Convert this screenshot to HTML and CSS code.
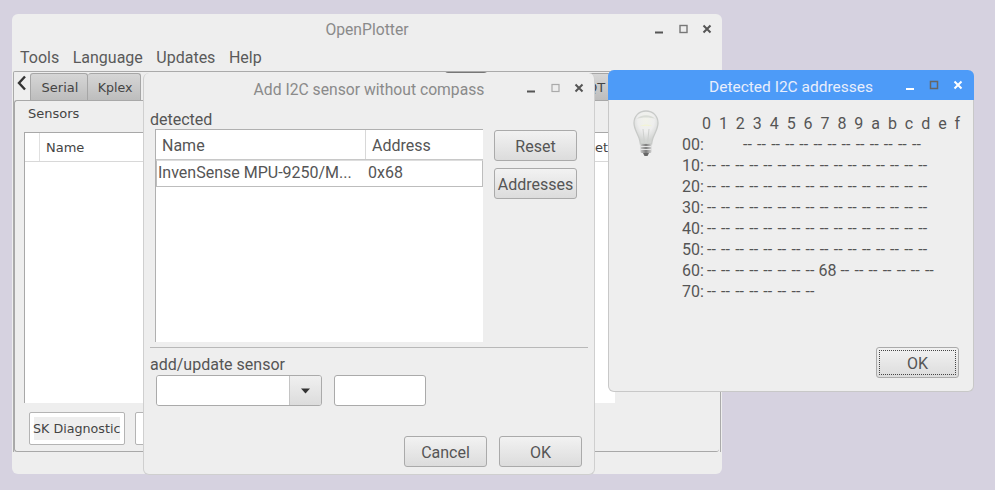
FILE: index.html
```html
<!DOCTYPE html>
<html lang="en">
<head>
<meta charset="utf-8">
<title>OpenPlotter</title>
<link rel="stylesheet" href="styles.css">
</head>
<body>
<section class="win main">
  <div class="titlebar">
    <span class="title">OpenPlotter</span>
    <div class="wctl">
      <svg viewBox="0 0 72 12" width="72" height="12"><path d="M3 9.500h8" class="c1"/><rect x="28" y="2.500" width="7" height="7" class="c2"/><path d="M51.500 2.500l7 7m0-7l-7 7" class="c3"/></svg>
    </div>
  </div>
  <nav class="menu"><span>Tools</span><span>Language</span><span>Updates</span><span>Help</span></nav>
  <div class="book">
    <div class="tabs">
      <svg class="back" viewBox="0 0 10 16" width="10" height="16"><path d="M8 1.500L2 8l6 6.500"/></svg>
      <span class="tab t1">Serial</span>
      <span class="tab t2">Kplex</span>
      <span class="tab hi"></span>
      <span class="tab qt">QT</span>
    </div>
    <div class="panel">
      <div class="subtab">Sensors</div>
      <div class="biglist">
        <div class="bighead"><span class="stub"></span><span class="nm">Name</span><span class="et">et</span></div>
      </div>
      <div class="foot"><span class="sk"><span>SK Diagnostic</span></span><span class="sk second"></span></div>
    </div>
  </div>
</section>

<section class="win dlg">
  <div class="titlebar">
    <span class="title">Add I2C sensor without compass</span>
    <div class="wctl">
      <svg viewBox="0 0 72 12" width="72" height="12"><path d="M3 9.500h8" class="c1"/><rect x="28" y="2.500" width="7" height="7" class="c2b"/><path d="M51.500 2.500l7 7m0-7l-7 7" class="c3"/></svg>
    </div>
  </div>
  <div class="lbl l1">detected</div>
  <div class="listrow">
    <div class="list">
      <div class="lhead"><span class="cn">Name</span><span class="ca">Address</span></div>
      <div class="lrow"><span class="rn">InvenSense MPU-9250/M...</span><span class="ra">0x68</span></div>
    </div>
    <div class="side"><button class="btn">Reset</button><button class="btn">Addresses</button></div>
  </div>
  <hr class="sep">
  <div class="lbl l2">add/update sensor</div>
  <div class="inputs">
    <div class="combo"><span class="cfield"></span><span class="carrow"><svg viewBox="0 0 10 6" width="10" height="6"><path d="M0 .500h9L4.500 5.500z"/></svg></span></div>
    <div class="field"></div>
  </div>
  <div class="actions"><button class="btn">Cancel</button><button class="btn">OK</button></div>
</section>

<section class="win addr">
  <div class="bluebar">
    <span class="title">Detected I2C addresses</span>
    <div class="wctl">
      <svg viewBox="0 0 72 12" width="72" height="12"><path d="M3 10h8" class="w1"/><rect x="27.500" y="2.500" width="7" height="7" class="w2"/><path d="M51.500 2.500l7 7m0-7l-7 7" class="w1"/></svg>
    </div>
  </div>
  <div class="addrbody">
    <svg class="bulb" viewBox="0 0 28 48" width="28" height="48">
      <defs>
        <radialGradient id="glass" cx="50%" cy="28%" r="62%"><stop offset="0" stop-color="#f2f3ea"/><stop offset="0.55" stop-color="#eeeeee"/><stop offset="1" stop-color="#d2d4d2"/></radialGradient>
        <linearGradient id="screw" x1="0" x2="1" y1="0" y2="0"><stop offset="0" stop-color="#c8c8c8"/><stop offset="0.5" stop-color="#7c7c7c"/><stop offset="1" stop-color="#d0d0d0"/></linearGradient>
      </defs>
      <path d="M14 1C7 1 2 6 2 13c0 6 3.400 10 5.200 15.500 .8 2.400 1 4 1.200 5.500h11.200c.2-1.500.4-3.100 1.200-5.500C22.600 23 26 19 26 13 26 6 21 1 14 1z" fill="url(#glass)" stroke="#c8cac8" stroke-width="1.300"/>
      <path d="M5 9c3-5 15-5 18 0-4-2-14-2-18 0z" fill="#d9dcd6"/>
      <path d="M7 16.500c4-2.500 10-2.500 14 0-4-1.200-10-1.200-14 0z" fill="#f3f5c4"/>
      <path d="M11 19l1.500 15M17 19l-1.500 15" stroke="#cfd1cf" fill="none"/>
      <rect x="8.500" y="34" width="11" height="9" rx="1.500" fill="url(#screw)"/>
      <path d="M8.500 36.500h11M8.500 39.500h11" stroke="#e4e4e4"/>
      <path d="M11 43h6l-1.500 3h-3z" fill="#666"/>
    </svg>
    <pre class="hex"><span class="hexhead">0  1  2  3  4  5  6  7  8  9  a  b  c  d  e  f</span>
<span class="hexrow"><span class="ad">00:</span><span class="ds gap0">-- -- -- -- -- -- -- -- -- -- -- -- --</span></span>
<span class="hexrow"><span class="ad">10:</span><span class="ds">-- -- -- -- -- -- -- -- -- -- -- -- -- -- -- --</span></span>
<span class="hexrow"><span class="ad">20:</span><span class="ds">-- -- -- -- -- -- -- -- -- -- -- -- -- -- -- --</span></span>
<span class="hexrow"><span class="ad">30:</span><span class="ds">-- -- -- -- -- -- -- -- -- -- -- -- -- -- -- --</span></span>
<span class="hexrow"><span class="ad">40:</span><span class="ds">-- -- -- -- -- -- -- -- -- -- -- -- -- -- -- --</span></span>
<span class="hexrow"><span class="ad">50:</span><span class="ds">-- -- -- -- -- -- -- -- -- -- -- -- -- -- -- --</span></span>
<span class="hexrow"><span class="ad">60:</span><span class="ds">-- -- -- -- -- -- -- --</span><span class="val">68</span><span class="ds">-- -- -- -- -- -- --</span></span>
<span class="hexrow"><span class="ad">70:</span><span class="ds">-- -- -- -- -- -- -- --</span></span></pre>
  </div>
  <div class="addrfoot"><button class="btn focus">OK</button></div>
</section>
</body>
</html>
```

FILE: styles.css
```css
* { box-sizing: border-box; }
html, body { margin: 0; height: 100%; }
body {
  position: relative;
  width: 995px;
  height: 490px;
  overflow: hidden;
  background: #d6d2e0;
  font-family: Roboto, "Liberation Sans", sans-serif;
  font-size: 16px;
  color: #555;
}
.win {
  position: absolute;
  background: #eeeeee;
  border-radius: 6px;
  display: flex;
  flex-direction: column;
}
.main { left: 12px; top: 14px; width: 710px; height: 460px; }
.dlg { left: 143px; top: 73px; width: 452px; height: 402px; border: 1px solid #cfcfcf; border-top: 0; }
.addr { left: 608px; top: 70px; width: 366px; height: 322px; border: 1px solid #c8c8c8; border-top: 0; }

.titlebar { position: relative; height: 30px; flex: none; display: flex; align-items: center; justify-content: center; }
.title { color: #8a8a8a; font-size: 15.7px; }
.wctl { position: absolute; right: -2px; top: 9px; height: 12px; line-height: 0; }
.wctl svg { fill: none; stroke-width: 2; }
.c1, .c3 { stroke: #555; }
.c2 { stroke: #777; stroke-width: 1.4; }
.c2b { stroke: #aaa; stroke-width: 1.2; }
.w1 { stroke: #fff; }
.w2 { stroke: #666; stroke-width: 1.5; }

.main > .titlebar { height: 31px; }
.menu { height: 24px; margin-bottom: 2px; flex: none; display: flex; gap: 13.5px; padding-left: 8px; align-items: center; font-size: 16px; color: #5a5a5a; }
.book { width: 708px; margin: 0 0 22px 1px; flex: 1; min-height: 0; border: 1px solid #aaa; border-bottom: 0; border-radius: 2px 2px 0 0; display: flex; flex-direction: column; }
.tabs { height: 28px; flex: none; display: flex; align-items: flex-end; position: relative; font-family: "DejaVu Sans", sans-serif; font-size: 13px; }
.back { flex: none; margin: 0 3px 9px 3px; fill: none; stroke: #333; stroke-width: 2.4; }
.tab { height: 27px; flex: none; display: flex; align-items: center; justify-content: center; background: linear-gradient(#d6d6d6, #bdbdbd); border: 1px solid #a6a6a6; border-bottom: 0; border-radius: 3px 3px 0 0; color: #444; }
.t1 { width: 58px; padding-left: 2px; }
.t2 { width: 53px; border-left: 0; padding-left: 2px; font-size: 12.6px; }
.hi { width: 42px; height: 28px; margin-left: 304px; background: #eee; border-color: #777; }
.qt { width: 40px; margin-left: 89px; }
.panel { flex: 1; margin: 0 1px 0 0; padding: 0 0 0 9px; border: 1px solid #a8a8a8; border-radius: 3px; border-right: 0; display: flex; flex-direction: column; font-family: "DejaVu Sans", sans-serif; font-size: 13px; color: #444; background: #eee; }
.subtab { height: 31px; flex: none; padding: 5px 0 0 4px; }
.biglist { width: 591px; height: 271px; flex: none; background: #fff; border-left: 1px solid #a8a8a8; border-top: 1px solid #a8a8a8; }
.bighead { height: 29px; border-bottom: 1px solid #d8d8d8; display: flex; align-items: center; }
.stub { width: 15px; height: 100%; border-right: 1px solid #e0e0e0; flex: none; }
.nm { padding-left: 6px; }
.et { margin-left: auto; margin-right: 7px; }
.foot { display: flex; gap: 10px; padding: 9px 0 0 5px; }
.sk { width: 96px; height: 33px; background: #fff; border: 1px solid #b4b4b4; border-radius: 2px; display: flex; align-items: center; justify-content: center; }
.sk span { background: #eee; padding: 3px 0; white-space: nowrap; height: 23px; line-height: 17px; width: 86px; font-size: 12.7px; text-indent: -1px; }
.second { width: 60px; }

.dlg > .titlebar { height: 32px; }
.lbl { color: #555; padding-left: 6px; line-height: 18px; flex: none; }
.l1 { margin-top: 6px; }
.listrow { display: flex; margin: 0 0 0 11px; flex: none; }
.list { width: 328px; height: 213px; background: #fff; border-left: 1px solid #b0b0b0; border-top: 1px solid #b0b0b0; }
.lhead { height: 30px; display: flex; align-items: center; color: #555; border-bottom: 1px solid #c8c8c8; }
.cn { width: 210px; height: 100%; padding: 1px 0 0 6px; line-height: 29px; border-right: 1px solid #d8d8d8; }
.ca { padding: 2px 0 0 6px; }
.lrow { width: 327px; height: 27px; padding-bottom: 2px; border: 1px solid #bdbdbd; border-top: 1px solid #ddd; display: flex; align-items: center; white-space: nowrap; }
.rn { width: 211px; padding-left: 1px; }
.side { display: flex; flex-direction: column; gap: 7px; margin: 1px 0 0 11px; }
.btn { width: 83px; height: 31px; padding: 1px 0 0; font: inherit; color: #555; background: linear-gradient(#f2f2f2, #dcdcdc); border: 1px solid #aaaaaa; border-radius: 3px; }
.sep { width: 438px; margin: 5px 0 0 6px; border: 0; border-top: 1px solid #b8b8b8; height: 1px; flex: none; }
.l2 { margin-top: 8px; }
.inputs { display: flex; gap: 12px; margin: 1px 0 0 12px; flex: none; }
.combo { width: 166px; height: 31px; display: flex; border: 1px solid #aaa; border-radius: 3px; overflow: hidden; }
.cfield { flex: 1; background: #fff; border-right: 1px solid #c4c4c4; }
.carrow { width: 31px; background: linear-gradient(#f0f0f0, #dcdcdc); display: flex; align-items: center; justify-content: center; line-height: 0; }
.carrow svg { fill: #333; }
.field { width: 92px; height: 31px; background: #fff; border: 1px solid #aaa; border-radius: 3px; }
.actions { display: flex; justify-content: flex-end; gap: 12px; margin: 30px 12px 0 0; flex: none; }

.bluebar { position: relative; height: 30px; flex: none; margin: 0 -1px; background: #4d9bf8; border-radius: 6px 6px 0 0; display: flex; align-items: center; justify-content: center; }
.bluebar .title { color: #e8eefc; padding-top: 3px; font-size: 15.5px; }
.bluebar .wctl { right: -1px; }
.addrbody { display: flex; flex: none; height: 247px; }
.bulb { flex: none; margin: 10px 0 0 23px; }
.hex { margin: 13px 0 0 22px; font: inherit; line-height: 21px; color: #555; }
.hexhead { padding-left: 20px; }
.hexrow { display: inline-flex; }
.ad { width: 24px; flex: none; margin-right: 1px; }
.ds { word-spacing: 1.27px; }
.gap0 { margin-left: 36px; }
.val { margin: 0 4px; }
.addrfoot { display: flex; justify-content: flex-end; padding-right: 14px; }
.focus { outline: 1px dotted #444; outline-offset: -4px; }
```
